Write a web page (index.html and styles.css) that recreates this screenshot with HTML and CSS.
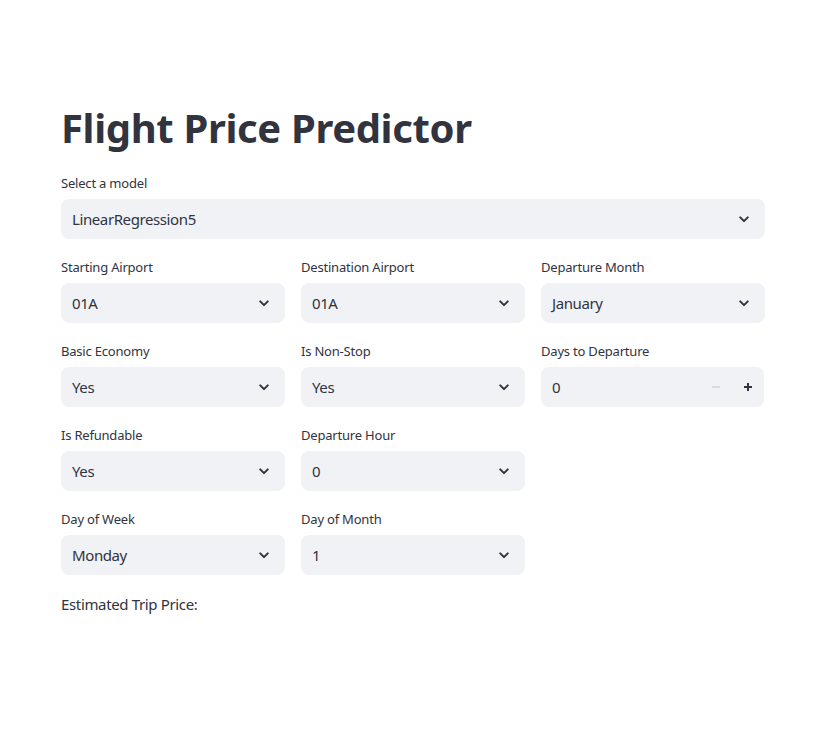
FILE: index.html
```html
<!DOCTYPE html>
<html>
<head>
<meta charset="utf-8">
<link rel="stylesheet" href="styles.css">
</head>
<body>
<main class="main">
  <h1 class="title">Flight Price Predictor</h1>
  <div class="field">
    <label class="label">Select a model</label>
    <div class="select"><span>LinearRegression5</span><svg class="chev" viewBox="0 0 12 8"><path d="M1.5 1.5 6 6l4.5-4.5" /></svg></div>
  </div>
  <div class="grid">
    <div class="field"><label class="label">Starting Airport</label><div class="select"><span>01A</span><svg class="chev" viewBox="0 0 12 8"><path d="M1.5 1.5 6 6l4.5-4.5" /></svg></div></div>
    <div class="field"><label class="label">Destination Airport</label><div class="select"><span>01A</span><svg class="chev" viewBox="0 0 12 8"><path d="M1.5 1.5 6 6l4.5-4.5" /></svg></div></div>
    <div class="field"><label class="label">Departure Month</label><div class="select"><span>January</span><svg class="chev" viewBox="0 0 12 8"><path d="M1.5 1.5 6 6l4.5-4.5" /></svg></div></div>

    <div class="field"><label class="label">Basic Economy</label><div class="select"><span>Yes</span><svg class="chev" viewBox="0 0 12 8"><path d="M1.5 1.5 6 6l4.5-4.5" /></svg></div></div>
    <div class="field"><label class="label">Is Non-Stop</label><div class="select"><span>Yes</span><svg class="chev" viewBox="0 0 12 8"><path d="M1.5 1.5 6 6l4.5-4.5" /></svg></div></div>
    <div class="field"><label class="label">Days to Departure</label>
      <div class="number"><span class="num-val">0</span>
        <span class="step minus"><svg viewBox="0 0 10 10"><path d="M1 5h8" /></svg></span>
        <span class="step plus"><svg viewBox="0 0 10 10"><path d="M1 5h8M5 1v8" /></svg></span>
      </div>
    </div>

    <div class="field"><label class="label">Is Refundable</label><div class="select"><span>Yes</span><svg class="chev" viewBox="0 0 12 8"><path d="M1.5 1.5 6 6l4.5-4.5" /></svg></div></div>
    <div class="field"><label class="label">Departure Hour</label><div class="select"><span>0</span><svg class="chev" viewBox="0 0 12 8"><path d="M1.5 1.5 6 6l4.5-4.5" /></svg></div></div>
    <div class="empty"></div>

    <div class="field"><label class="label">Day of Week</label><div class="select"><span>Monday</span><svg class="chev" viewBox="0 0 12 8"><path d="M1.5 1.5 6 6l4.5-4.5" /></svg></div></div>
    <div class="field"><label class="label">Day of Month</label><div class="select"><span>1</span><svg class="chev" viewBox="0 0 12 8"><path d="M1.5 1.5 6 6l4.5-4.5" /></svg></div></div>
    <div class="empty"></div>
  </div>
  <p class="result">Estimated Trip Price:</p>
</main>
</body>
</html>
```

FILE: styles.css
```css
* { box-sizing: border-box; }
html, body { margin: 0; padding: 0; background: #fff; }
body {
  font-family: "Noto Sans", "Open Sans", sans-serif;
  color: rgb(49, 51, 63);
}
.main {
  width: 704px;
  margin-left: 61px;
  padding-top: 82px;
  display: flex;
  flex-direction: column;
  gap: 16px;
}
.title {
  margin: 0 0 1px;
  padding-top: 20px;
  font-size: 40px;
  font-weight: 700;
  line-height: 52px;
  letter-spacing: -0.35px;
  color: rgb(49, 51, 63);
}
.grid {
  display: grid;
  grid-template-columns: repeat(3, 224px);
  column-gap: 16px;
  row-gap: 16px;
}
.field { display: flex; flex-direction: column; }
.label {
  font-size: 13px;
  line-height: 24px;
  height: 24px;
  margin-bottom: 4px;
  letter-spacing: -0.2px;
}
.select, .number {
  height: 40px;
  background: #f0f2f6;
  border-radius: 8px;
  display: flex;
  align-items: center;
  font-size: 15px;
  letter-spacing: -0.4px;
}
.select { padding: 0 16px 0 11px; justify-content: space-between; }
.chev { width: 10px; height: 7px; fill: none; stroke: rgb(49, 51, 63); stroke-width: 2.4; stroke-linecap: round; stroke-linejoin: round; }
.number { padding-left: 11px; margin-right: 1px; }
.num-val { flex: 1; }
.step { width: 32px; height: 40px; display: flex; align-items: center; justify-content: center; }
.step svg { width: 10px; height: 10px; fill: none; stroke-width: 1.8; }
.minus svg { stroke: #d5d7de; }
.plus svg { stroke: rgb(49, 51, 63); stroke-width: 2; }
.result {
  margin: 0;
  font-size: 15px;
  line-height: 26px;
  letter-spacing: -0.35px;
}
```
